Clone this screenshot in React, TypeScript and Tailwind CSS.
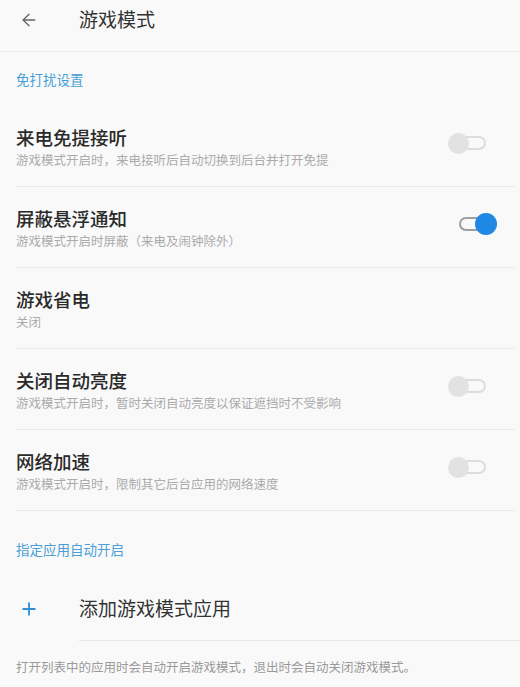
import { ArrowLeft, Plus } from 'lucide-react'

const font = { fontFamily: '"Noto Sans CJK SC", "Noto Sans", sans-serif' }

type Row = { title: string; desc: string; toggle?: 'on' | 'off' }

const rows: Row[] = [
  { title: '来电免提接听', desc: '游戏模式开启时，来电接听后自动切换到后台并打开免提', toggle: 'off' },
  { title: '屏蔽悬浮通知', desc: '游戏模式开启时屏蔽（来电及闹钟除外）', toggle: 'on' },
  { title: '游戏省电', desc: '关闭' },
  { title: '关闭自动亮度', desc: '游戏模式开启时，暂时关闭自动亮度以保证遮挡时不受影响', toggle: 'off' },
  { title: '网络加速', desc: '游戏模式开启时，限制其它后台应用的网络速度', toggle: 'off' },
]

function Toggle({ on }: { on: boolean }) {
  if (on) {
    return (
      <div className="relative h-[22px] w-[40px]">
        <div className="absolute left-[2px] top-[4px] h-[14px] w-[30px] rounded-full border-2 border-[#9e9e9e]" />
        <div className="absolute right-0 top-0 h-[22px] w-[22px] rounded-full bg-[#1e88e5]" />
      </div>
    )
  }
  return (
    <div className="relative h-[22px] w-[40px]">
      <div className="absolute right-[2px] top-[4px] h-[14px] w-[30px] rounded-full border-2 border-[#dcdcdc]" />
      <div className="absolute left-0 top-[1px] h-[21px] w-[21px] rounded-full bg-[#e2e2e2]" />
    </div>
  )
}

export default function App() {
  return (
    <div className="min-h-[687px] w-[520px] bg-[#f9f9f9] text-[#222]" style={font}>
      <header className="flex h-[52px] items-center border-b border-[#ececec] pb-[12px]">
        <ArrowLeft size={20} strokeWidth={1.6} className="ml-[19px] text-[#666]" />
        <span className="ml-[40px] text-[19px] text-[#333]">游戏模式</span>
      </header>

      <div className="flex h-[54px] items-center px-4 text-[13.5px] text-[#4a9fd8]">免打扰设置</div>

      {rows.map((r, i) => (
        <div key={i} className="ml-4 mr-[5px] flex h-[81px] items-center border-b border-[#ebebeb]">
          <div className="flex-1 pt-[1px]">
            <div className="text-[18.5px] font-medium leading-[24px] text-[#2a2a2a]">{r.title}</div>
            <div className="mt-[2px] text-[12.5px] leading-[17px] text-[#ababab]">{r.desc}</div>
          </div>
          {r.toggle && (
            <div className={r.toggle === 'on' ? 'mr-[18px] -mt-[6px]' : 'mr-[27px] -mt-[6px]'}>
              <Toggle on={r.toggle === 'on'} />
            </div>
          )}
        </div>
      ))}

      <div className="flex h-[76px] items-center px-4 pt-[1px] text-[13.5px] text-[#4a9fd8]">指定应用自动开启</div>

      <div className="flex h-[53px] items-center pb-[10px]">
        <Plus size={20} strokeWidth={2.2} className="ml-[19px] text-[#2f8fd6]" />
        <span className="ml-[40px] text-[19px] text-[#333]">添加游戏模式应用</span>
      </div>
      <div className="ml-[79px] border-b border-[#e6e6e6]" />
      <div className="px-4 pt-[17px] text-[12.5px] text-[#9a9a9a]">打开列表中的应用时会自动开启游戏模式，退出时会自动关闭游戏模式。</div>
    </div>
  )
}
